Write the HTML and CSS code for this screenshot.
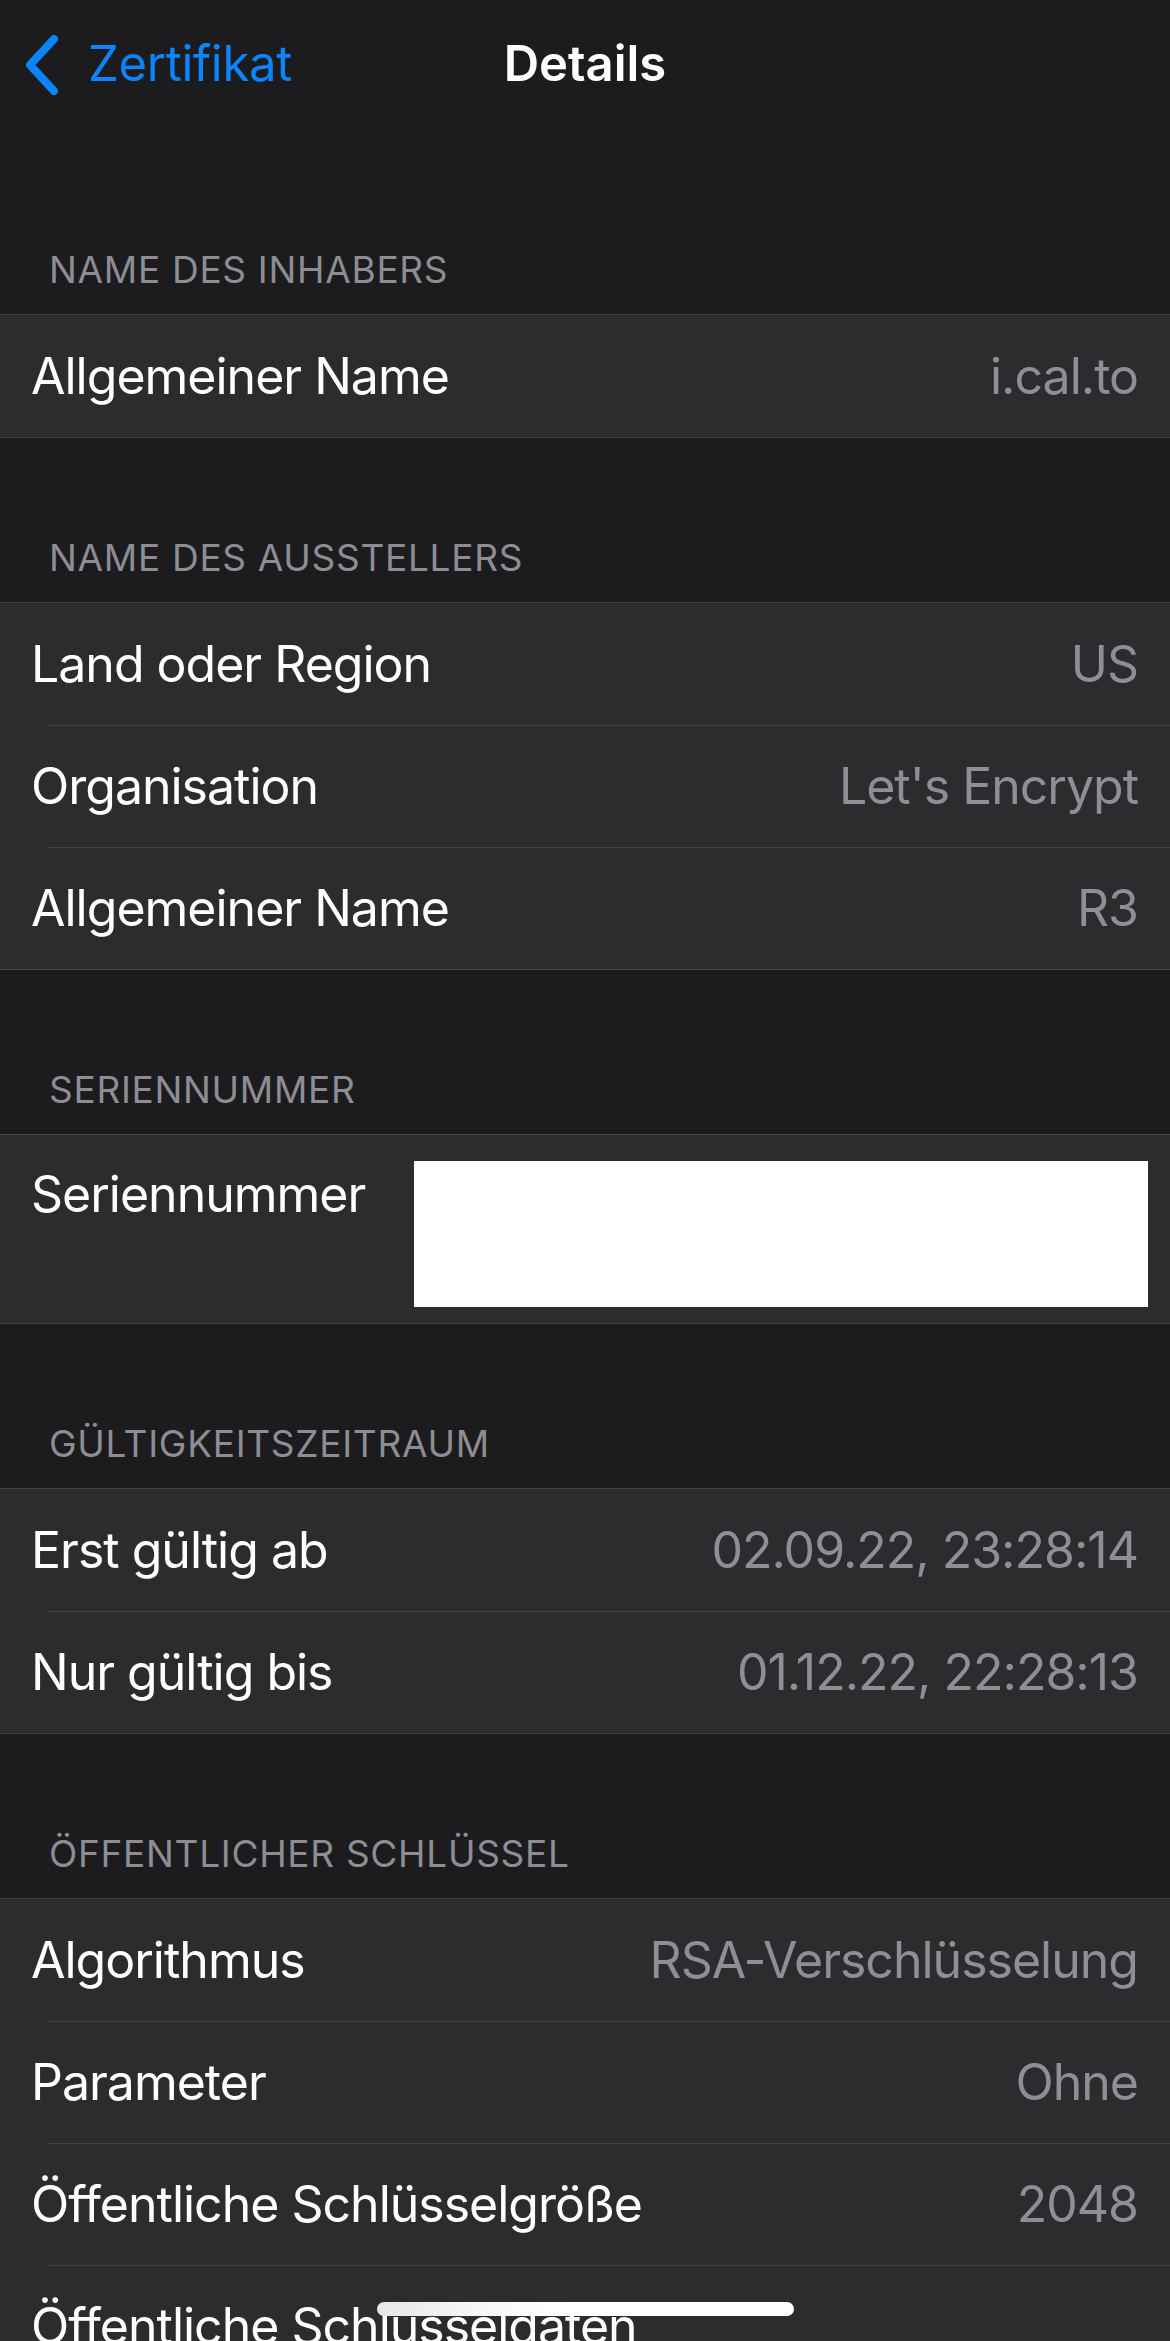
FILE: index.html
```html
<!DOCTYPE html>
<html lang="de">
<head>
<meta charset="utf-8">
<title>Details</title>
<link rel="stylesheet" href="styles.css">
</head>
<body>
<div class="screen">
  <header class="nav">
    <div class="back">
      <svg class="chev" width="40" height="60" viewBox="0 0 40 60" aria-hidden="true">
        <polyline points="30,4 6,30 30,56" fill="none" stroke="#0a84ff" stroke-width="8" stroke-linecap="round" stroke-linejoin="round"/>
      </svg>
      <span class="back-label">Zertifikat</span>
    </div>
    <div class="title">Details</div>
    <div></div>
  </header>

  <section>
    <div class="sec-head">NAME DES INHABERS</div>
    <div class="group">
      <div class="row"><span class="label">Allgemeiner Name</span><span class="value">i.cal.to</span></div>
    </div>
  </section>

  <section>
    <div class="sec-head">NAME DES AUSSTELLERS</div>
    <div class="group">
      <div class="row"><span class="label">Land oder Region</span><span class="value">US</span></div>
      <div class="row"><span class="label">Organisation</span><span class="value">Let's Encrypt</span></div>
      <div class="row"><span class="label">Allgemeiner Name</span><span class="value">R3</span></div>
    </div>
  </section>

  <section>
    <div class="sec-head">SERIENNUMMER</div>
    <div class="group">
      <div class="row row-tall"><span class="label">Seriennummer</span><div class="redacted"></div></div>
    </div>
  </section>

  <section>
    <div class="sec-head">GÜLTIGKEITSZEITRAUM</div>
    <div class="group">
      <div class="row"><span class="label">Erst gültig ab</span><span class="value">02.09.22, 23:28:14</span></div>
      <div class="row"><span class="label">Nur gültig bis</span><span class="value">01.12.22, 22:28:13</span></div>
    </div>
  </section>

  <section>
    <div class="sec-head">ÖFFENTLICHER SCHLÜSSEL</div>
    <div class="group">
      <div class="row"><span class="label">Algorithmus</span><span class="value">RSA-Verschlüsselung</span></div>
      <div class="row"><span class="label">Parameter</span><span class="value">Ohne</span></div>
      <div class="row"><span class="label">Öffentliche Schlüsselgröße</span><span class="value">2048</span></div>
      <div class="row"><span class="label">Öffentliche Schlüsseldaten</span></div>
    </div>
  </section>

  <div class="home-indicator"></div>
</div>
</body>
</html>
```

FILE: styles.css
```css
html, body {
  margin: 0;
  padding: 0;
  background: #1c1c1e;
}

body {
  font-family: "Inter", "Noto Sans", sans-serif;
  color: #ffffff;
}

.screen {
  width: 1170px;
  height: 2341px;
  overflow: hidden;
  position: relative;
  background: #1c1c1e;
}

/* Navigation bar */
.nav {
  height: 150px;
  box-sizing: border-box;
  padding-top: 34px;
  display: grid;
  grid-template-columns: 1fr auto 1fr;
  align-items: start;
}

.back {
  display: flex;
  align-items: center;
  padding-left: 24px;
  height: 60px;
}

.chev {
  display: block;
  margin-top: 2px;
}

.back-label {
  margin-left: 24px;
  font-size: 49px;
  line-height: 60px;
  color: #0a84ff;
  letter-spacing: -0.3px;
}

.title {
  font-size: 49px;
  line-height: 60px;
  font-weight: 600;
  letter-spacing: 0;
}

/* Section headers */
.sec-head {
  height: 164.1px;
  box-sizing: border-box;
  display: flex;
  align-items: flex-end;
  padding: 0 0 22px 49px;
  font-size: 37px;
  line-height: 44px;
  color: #8d8d93;
  letter-spacing: 0.7px;
}

/* Groups and rows */
.group {
  background: #2c2c2e;
  border-top: 1px solid #414145;
  border-bottom: 1px solid #414145;
}

.row {
  height: 121.9px;
  box-sizing: border-box;
  display: flex;
  align-items: center;
  justify-content: space-between;
  padding: 0 32px 0 31px;
  font-size: 50px;
  line-height: 60px;
  letter-spacing: -1px;
}

.row + .row {
  background: linear-gradient(#414145, #414145) 48px 0 / calc(100% - 48px) 1px no-repeat;
}

.label {
  color: #ffffff;
  white-space: nowrap;
}

.value {
  color: #8e8e93;
  white-space: nowrap;
}

.row-tall {
  height: 188.2px;
  align-items: flex-start;
  padding: 26px 22px 15px 31px;
}

.row-tall .label {
  margin-top: 3px;
}

.redacted {
  width: 734px;
  height: 146px;
  background: #ffffff;
}

/* Home indicator overlays the list */
.home-indicator {
  position: absolute;
  left: 377px;
  top: 2302px;
  width: 417px;
  height: 14px;
  border-radius: 7px;
  background: linear-gradient(90deg, #e6e6e6 0%, #f7f7f7 25%, #ffffff 45%, #ffffff 100%);
}
```
